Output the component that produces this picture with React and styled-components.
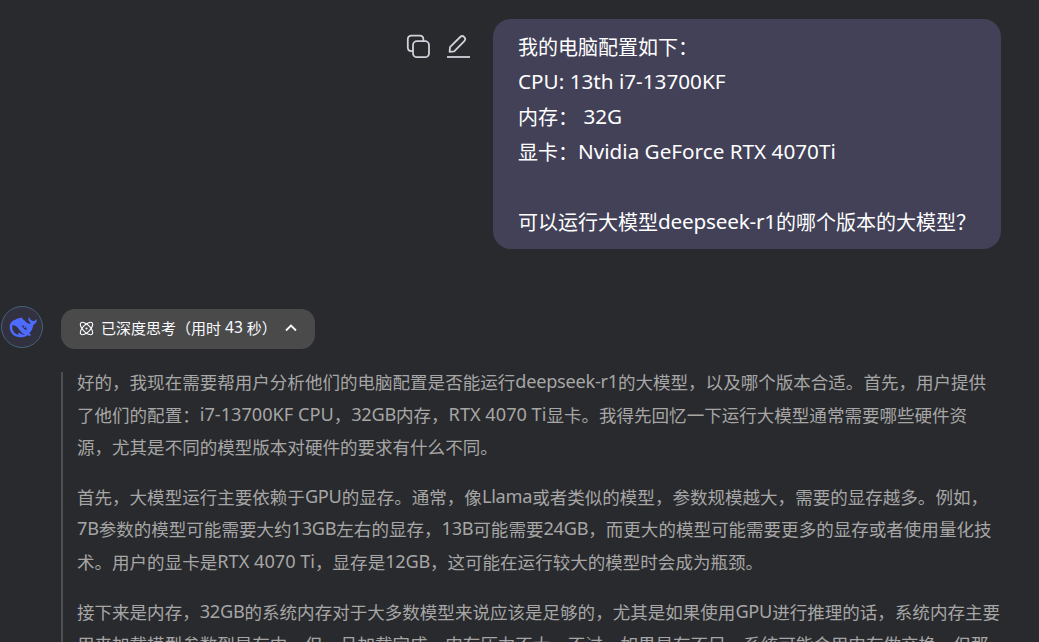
import React from 'react';
import styled, { createGlobalStyle } from 'styled-components';

const GlobalStyle = createGlobalStyle`
    * {
        box-sizing: border-box;
    }
    body {
        margin: 0;
        background: #292a2d;
        font-family: "Noto Sans CJK SC", sans-serif;
        overflow: hidden;
    }
`;

const Page = styled.main`
    height: 642px;
    overflow: hidden;
    padding: 19px 38px 0 1px;
    background: #292a2d;
`;

const UserRow = styled.section`
    display: flex;
    justify-content: flex-end;
    align-items: flex-start;
`;

const Actions = styled.div`
    display: flex;
    gap: 15px;
    margin: 15px 22px 0 0;
    color: #d0d1da;
`;

const IconButton = styled.button`
    display: flex;
    width: 25px;
    height: 25px;
    padding: 0;
    border: 0;
    background: none;
    color: inherit;
`;

const Bubble = styled.div`
    width: 508px;
    height: 230px;
    padding: 10px 25px;
    border-radius: 18px;
    background: #424158;
    color: #ffffff;
    font-size: 20px;
    line-height: 35px;
`;

const Line = styled.div`
    height: ${props => props.$height || 35}px;
    line-height: ${props => props.$height || 35}px;
    white-space: pre;
`;

const Latin = styled.span`
    font-family: "Noto Sans", sans-serif;
    font-size: 1.035em;
    line-height: 0;
    vertical-align: 0.04em;
    letter-spacing: ${props => props.$track || 0}px;
`;

const AnswerRow = styled.section`
    display: flex;
    align-items: flex-start;
    margin-top: 57px;
`;

const Avatar = styled.div`
    display: flex;
    flex-shrink: 0;
    align-items: center;
    justify-content: center;
    width: 42px;
    height: 42px;
    margin-right: 18px;
    padding: 1px 0 0 2px;
    border: 1px solid #47617c;
    border-radius: 50%;
    background: #323140;
`;

const Answer = styled.div`
    flex: 1;
    min-width: 0;
    padding-top: 3px;
`;

const ThinkButton = styled.button`
    display: flex;
    align-items: center;
    width: 254px;
    height: 40px;
    padding: 0 17px 2px 18px;
    border: 0;
    border-radius: 14px;
    background: #4a4a4a;
    color: #f8faff;
    font-family: inherit;
    font-size: 15px;
    white-space: pre;
`;

const ThinkLabel = styled.span`
    flex: 1;
    margin-left: 7px;
    text-align: left;
    line-height: 22px;
`;

const Thoughts = styled.div`
    display: flow-root;
    margin-top: 23px;
    padding-left: 14px;
    border-left: 2px solid #4d4e56;
    color: #a6a6a6;
    font-size: 17.55px;
`;

const Paragraph = styled.div`
    padding-bottom: 17px;

    &:first-child {
        margin-top: -6px;
    }
`;

const CopyIcon = () => (
    <svg width="25" height="25" viewBox="0 0 25 25" fill="none" stroke="currentColor" strokeWidth="1.8">
        <rect x="7" y="7.2" width="16" height="16" rx="4" />
        <path d="M7 17.2H5.5A3.8 3.8 0 0 1 1.8 13.5V5.4a3.8 3.8 0 0 1 3.7-3.7h8.2a3.8 3.8 0 0 1 3.7 3.7V7" />
    </svg>
);

const EditIcon = () => (
    <svg width="25" height="25" viewBox="0 0 25 25" fill="none" stroke="currentColor" strokeWidth="1.8" strokeLinejoin="round">
        <path d="M3.6 17.8 4 13.2 14.2 3a2.9 2.9 0 0 1 4.1 4.1L8.2 17.3Z" />
        <path d="M1 23h23" />
    </svg>
);

const WhaleIcon = () => (
    <svg width="28" height="21" viewBox="0 0 28 22" preserveAspectRatio="none">
        <path
            fill="#4d6bfe"
            d="M27.700 2.700c-.3-.1-.5.1-.7.300-1.200 1.300-2.500 1.600-3.900.900-1.400-.7-2.200-1.500-2.600-3-.2-.7-.8-.6-1 0-.6 2 .2 3.700 1.900 5 .5.4.4.7-.2 1-1 .4-1.900.1-3.100-.8C15.800 4.400 15.300 2.900 13.500 2.100c-.5-.3-.2-.9.200-1.100-3-.5-5 .9-7 1.500C3.200 3.300.7 6.500.7 10.300c0 6 4 10.400 9.600 10.900 3.200.3 5.900-.4 8-2.100.9.300 2.400.7 3.300.3.600-.4.300-1-.3-1.300-1.100-.5-1.200-.7-.7-1.300 1.700-2 2.900-4.300 3.400-7.100.2-1.300.4-1.700 1.200-2.200 1.700-.8 2.400-2.300 2.700-4.300 0-.3 0-.4-.2-.5Z"
        />
        <path
            fill="#323140"
            d="M15.800 18.300c-3-1.300-4.600-3.700-6.200-6.100C8 9.900 5.900 8.300 3.300 8.600c-.6 4.700 1.500 8.300 5.300 9.700 1.200.5 1.500-.4.800-.9-.7-.8-.1-1.300.9-.8 1.300.9 3.400 2.400 5.500 1.700ZM13.700 8.900c1.800 0 3.500 1.700 4.200 3.900-.4.6-.8.8-1.400.6-1.400-.5-2.100-2.100-3.100-2.900-.8-.6-.6-1.500.3-1.600Z"
        />
        <circle cx="15.400" cy="10.700" r=".9" fill="#4d6bfe" />
    </svg>
);

const AtomIcon = () => (
    <svg width="15" height="15" viewBox="0 0 15 15" fill="none" stroke="currentColor" strokeWidth="1.15">
        <ellipse cx="7.500" cy="7.500" rx="8" ry="3.600" transform="rotate(45 7.5 7.5)" />
        <ellipse cx="7.500" cy="7.500" rx="8" ry="3.600" transform="rotate(-45 7.5 7.5)" />
        <circle cx="7.500" cy="7.500" r="1.100" fill="currentColor" stroke="none" />
    </svg>
);

const ChevronIcon = () => (
    <svg width="14" height="14" viewBox="0 0 14 14" fill="none" stroke="currentColor" strokeWidth="1.800">
        <path d="m2 9.500 5-5 5 5" />
    </svg>
);

const thoughts = [
    [
        '好的，我现在需要帮用户分析他们的电脑配置是否能运行deepseek-r1的大模型，以及哪个版本合适。首先，用户提供',
        '了他们的配置：i7-13700KF CPU，32GB内存，RTX 4070 Ti显卡。我得先回忆一下运行大模型通常需要哪些硬件资',
        '源，尤其是不同的模型版本对硬件的要求有什么不同。',
    ],
    [
        '首先，大模型运行主要依赖于GPU的显存。通常，像Llama或者类似的模型，参数规模越大，需要的显存越多。例如，',
        '7B参数的模型可能需要大约13GB左右的显存，13B可能需要24GB，而更大的模型可能需要更多的显存或者使用量化技',
        '术。用户的显卡是RTX 4070 Ti，显存是12GB，这可能在运行较大的模型时会成为瓶颈。',
    ],
    [
        '接下来是内存，32GB的系统内存对于大多数模型来说应该是足够的，尤其是如果使用GPU进行推理的话，系统内存主要',
        '用来加载模型参数到显存中，但一旦加载完成，内存压力不大。不过，如果显存不足，系统可能会用内存做交换，但那',
    ],
];

// names and units sit a bit tighter than the long model numbers
const tight = /^[a-z]{2}|B$|^GPU$|^Llama$/;

const renderMixed = text =>
    text.split(/([\x20-\x7e]+)/).map((part, i) =>
        i % 2 ? <Latin key={i} $track={tight.test(part) ? -0.25 : 0}>{part}</Latin> : part
    );

const App = () => {
    return (
        <Page>
            <GlobalStyle />
            <UserRow>
                <Actions>
                    <IconButton aria-label="复制"><CopyIcon /></IconButton>
                    <IconButton aria-label="编辑"><EditIcon /></IconButton>
                </Actions>
                <Bubble>
                    <Line>我的电脑配置如下：</Line>
                    <Line><Latin>CPU: 13th i7-13700KF</Latin></Line>
                    <Line>内存：<Latin> 32G</Latin></Line>
                    <Line>显卡：<Latin>Nvidia GeForce RTX 4070Ti</Latin></Line>
                    <Line />
                    <Line>可以运行大模型<Latin $track={-0.2}>deepseek-r1</Latin>的哪个版本的大模型？</Line>
                </Bubble>
            </UserRow>
            <AnswerRow>
                <Avatar><WhaleIcon /></Avatar>
                <Answer>
                    <ThinkButton>
                        <AtomIcon />
                        <ThinkLabel>已深度思考（用时<Latin> 43 </Latin>秒）</ThinkLabel>
                        <ChevronIcon />
                    </ThinkButton>
                    <Thoughts>
                        {thoughts.map((lines, i) => (
                            <Paragraph key={i}>
                                {lines.map(line => (
                                    <Line key={line} $height={32.6}>{renderMixed(line)}</Line>
                                ))}
                            </Paragraph>
                        ))}
                    </Thoughts>
                </Answer>
            </AnswerRow>
        </Page>
    );
};

export default App;
